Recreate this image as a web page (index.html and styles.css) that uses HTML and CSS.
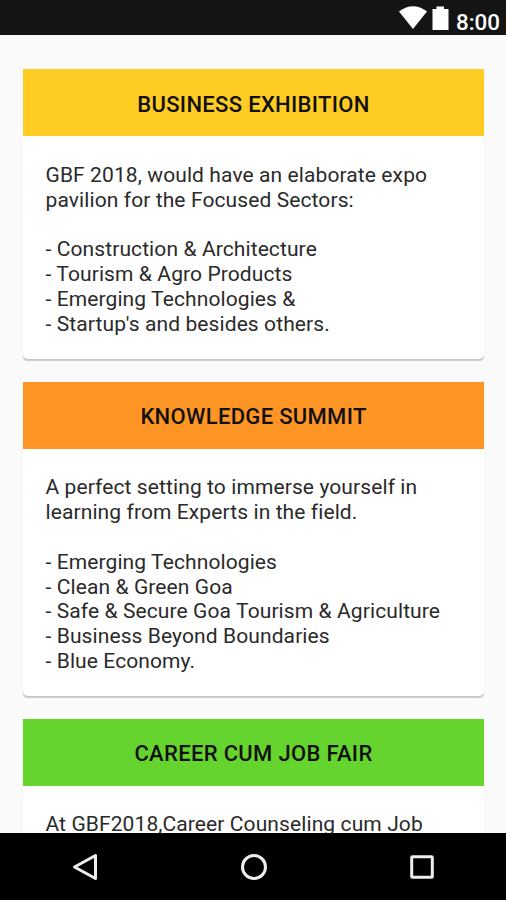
FILE: index.html
```html
<!DOCTYPE html>
<html lang="en">
<head>
  <meta charset="UTF-8">
  <meta name="viewport" content="width=device-width, initial-scale=1.0">
  <title>GBF 2018 - Events</title>
  <link rel="stylesheet" href="styles.css">
</head>
<body>
  <header class="status-bar">
    <svg class="wifi" width="30" height="24" viewBox="0 0 30 24">
      <path d="M1 5.500Q15 -5 29 5.500L15 23Z" fill="#fff"/>
    </svg>
    <svg class="battery" width="17" height="24" viewBox="0 0 17 24">
      <path d="M4.500 0.500H12V3H16.500V24H0.500V3H4.500Z" fill="#fff"/>
    </svg>
    <span class="time">8:00</span>
  </header>

  <main class="content">
    <section class="card">
      <h2 class="yellow"><span>BUSINESS EXHIBITION</span></h2>
      <div class="card-body">
        <p><span>GBF 2018, would have an elaborate expo</span><br><span>pavilion for the Focused Sectors:</span></p>
        <p>
          <span>- Construction &amp; Architecture</span><br>
          <span>- Tourism &amp; Agro Products</span><br>
          <span>- Emerging Technologies &amp;</span><br>
          <span>- Startup's and besides others.</span>
        </p>
      </div>
    </section>

    <section class="card">
      <h2 class="orange"><span>KNOWLEDGE SUMMIT</span></h2>
      <div class="card-body">
        <p><span>A perfect setting to immerse yourself in</span><br><span>learning from Experts in the field.</span></p>
        <p>
          <span>- Emerging Technologies</span><br>
          <span>- Clean &amp; Green Goa</span><br>
          <span>- Safe &amp; Secure Goa Tourism &amp; Agriculture</span><br>
          <span>- Business Beyond Boundaries</span><br>
          <span>- Blue Economy.</span>
        </p>
      </div>
    </section>

    <section class="card">
      <h2 class="green"><span>CAREER CUM JOB FAIR</span></h2>
      <div class="card-body">
        <p><span>At GBF2018,Career Counseling cum Job</span></p>
      </div>
    </section>
  </main>

  <!-- Android navigation buttons -->
  <nav class="nav-bar">
    <svg width="28" height="28" viewBox="0 0 28 28">
      <path d="M24.500 2.500V25.500L3.500 14Z"/>
    </svg>
    <svg width="28" height="28" viewBox="0 0 28 28">
      <circle cx="14" cy="14" r="11.500"/>
    </svg>
    <svg width="28" height="28" viewBox="0 0 28 28">
      <rect x="3.700" y="3.700" width="20.600" height="20.600" rx="0.800"/>
    </svg>
  </nav>
</body>
</html>
```
FILE: styles.css
```css
* {
  box-sizing: border-box;
}

body {
  font-family: Roboto, sans-serif;
  background-color: #fafafa;
  color: #2a2a2a;
  margin: 0;
  height: 100vh;
  display: flex;
  flex-direction: column;
  overflow: hidden;
}

.status-bar {
  height: 35px;
  flex: none;
  background-color: #141414;
  color: #fff;
  display: flex;
  align-items: flex-start;
  justify-content: flex-end;
  padding: 6px 6px 0 0;
}

.battery {
  margin-left: 4px;
}

.time {
  font-size: 22.4px;
  font-weight: 500;
  line-height: 32px;
  margin-left: 7px;
}

.content {
  flex: 1;
  min-height: 0;
  overflow: hidden;
  padding: 34.300px 22px 0 23px;
}

.card {
  background-color: #fff;
  border-radius: 0 0 5px 5px;
  box-shadow: 0 2px 1px -0.500px rgba(0, 0, 0, 0.2);
  margin-bottom: 22.500px;
}

.card h2 {
  margin: 0;
  height: 67px;
  display: flex;
  align-items: center;
  justify-content: center;
  padding-top: 3px;
  font-size: 22px;
  font-weight: 500;
  letter-spacing: 0.320px;
  color: #111;
}

.yellow {
  background-color: #ffcc23;
}

.orange {
  background-color: #ff9524;
}

.green {
  background-color: #66d42f;
}

.card-body {
  padding: 26.500px 22px 22.500px 22.500px;
  font-size: 21px;
  line-height: 24.850px;
  letter-spacing: 0.100px;
}

.card-body p {
  margin: 0 0 24.850px;
  white-space: nowrap;
}

.card-body p:last-child {
  margin-bottom: 0;
}

.nav-bar {
  height: 67px;
  flex: none;
  background-color: #000;
  display: flex;
  align-items: center;
  justify-content: space-between;
  padding: 0 70px 0 71px;
}

.nav-bar svg {
  fill: none;
  stroke: #eee;
  stroke-width: 3;
  stroke-linejoin: round;
}
```
